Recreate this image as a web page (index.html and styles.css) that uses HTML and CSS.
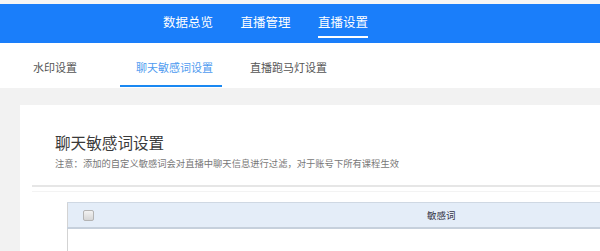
FILE: index.html
```html
<!DOCTYPE html>
<html lang="zh-CN">
    <head>
        <meta charset="UTF-8">
        <title>直播设置</title>
        <link rel="stylesheet" href="styles.css">
    </head>
    <body>
        <div class="topline"></div>
        <div class="nav">
            <a href="#">数据总览</a>
            <a href="#">直播管理</a>
            <a href="#" class="active">直播设置</a>
        </div>
        <div class="tabs">
            <a href="#" class="tab">水印设置</a>
            <a href="#" class="tab active">聊天敏感词设置</a>
            <a href="#" class="tab">直播跑马灯设置</a>
        </div>
        <div class="main">
            <div class="card">
                <div class="card_head">
                    <h2>聊天敏感词设置</h2>
                    <p class="note">注意：添加的自定义敏感词会对直播中聊天信息进行过滤，对于账号下所有课程生效</p>
                </div>
                <div class="divider"></div>
                <table class="words">
                    <thead>
                        <tr>
                            <th class="col_check"><span class="check"></span></th>
                            <th>敏感词</th>
                        </tr>
                    </thead>
                    <tbody>
                        <tr>
                            <td></td>
                            <td></td>
                        </tr>
                    </tbody>
                </table>
            </div>
        </div>
    </body>
</html>
```

FILE: styles.css
```css
body{
    margin: 0;
    background-color: #f2f2f2;
    font-family: "Noto Sans CJK SC", "Microsoft YaHei", sans-serif;
    overflow: hidden;
}

a{
    text-decoration: none;
}

.topline{
    height: 4px;
    background-color: #f5f5f5;
}

.nav{
    height: 39px;
    background-color: #1a7efa;
    display: flex;
    align-items: flex-start;
    gap: 27.5px;
    padding-left: 163px;
}

.nav a{
    color: #fff;
    font-size: 12.5px;
    line-height: 14px;
    padding: 11px 0 7px 0;
}

.nav a.active{
    border-bottom: 2px solid #fff;
}

.tabs{
    height: 45px;
    background-color: #fff;
    display: flex;
    align-items: flex-start;
    padding-left: 19px;
}

.tab{
    color: #555;
    font-size: 11px;
    line-height: 14px;
    padding: 17px 14px 11px 14px;
}

.tab.active{
    color: #4f9bf0;
    padding: 17px 9px 11px 16px;
    margin: 0 14px 0 29px;
    border-bottom: 2px solid #1a88f2;
}

.main{
    padding: 17px 0 0 20px;
}

.card{
    background-color: #fff;
    height: 119px;
    padding: 27px 0 0 12px;
    overflow: hidden;
}

.card_head{
    padding-left: 23px;
    margin-bottom: 16px;
}

.card_head h2{
    margin: 0;
    font-size: 15.6px;
    line-height: 20px;
    font-weight: normal;
    color: #3a3a3a;
}

.note{
    margin: 5px 0 0 0;
    font-size: 9.3px;
    line-height: 12px;
    color: #777;
}

.divider{
    height: 4px;
    border-top: 2px solid #e6e6e6;
    border-bottom: 1px solid #f3f3f3;
}

.words{
    margin: 10px 0 0 35px;
    width: 708px;
    border-collapse: collapse;
    border-left: 1px solid #d3d3d3;
}

.words th{
    height: 24px;
    padding: 0;
    background-color: #e4edf8;
    border-top: 1px solid #cfd8e3;
    border-bottom: 2px solid #c6d0dc;
    font-size: 9.5px;
    font-weight: normal;
    color: #334;
}

.words th.col_check{
    width: 40px;
    text-align: left;
    padding-left: 15px;
    box-sizing: border-box;
}

.check{
    display: block;
    width: 9px;
    height: 9px;
    border: 1px solid #b4b4b4;
    border-radius: 2px;
    background: linear-gradient(#f2f2f2, #d6d6d6);
}

.words td{
    height: 30px;
}
```
